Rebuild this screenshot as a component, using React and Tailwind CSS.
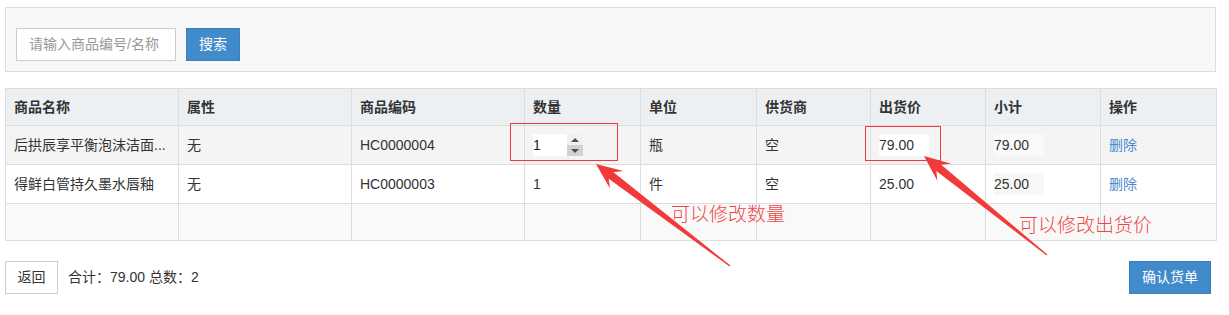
import React from "react";

function arrowPoints(tx, ty, sx, sy) {
  const dx = sx - tx, dy = sy - ty;
  const L = Math.hypot(dx, dy);
  const ux = dx / L, uy = dy / L;
  const nx = -uy, ny = ux;
  const headLen = 26, headHalf = 11, neckLen = 19, neckHalf = 4, tailHalf = 0.6;
  const p = (a, b) => `${a.toFixed(1)},${b.toFixed(1)}`;
  return [
    p(tx, ty),
    p(tx + ux * headLen + nx * headHalf, ty + uy * headLen + ny * headHalf),
    p(tx + ux * neckLen + nx * neckHalf, ty + uy * neckLen + ny * neckHalf),
    p(sx + nx * tailHalf, sy + ny * tailHalf),
    p(sx - nx * tailHalf, sy - ny * tailHalf),
    p(tx + ux * neckLen - nx * neckHalf, ty + uy * neckLen - ny * neckHalf),
    p(tx + ux * headLen - nx * headHalf, ty + uy * headLen - ny * headHalf),
  ].join(" ");
}

const font = { fontFamily: '"Liberation Sans", "Noto Sans CJK SC", sans-serif' };

function Th({ children, w }) {
  return (
    <th className={`${w} h-[37px] border border-[#dddddd] px-[8px] text-left align-middle text-[14px] font-bold text-[#333333]`}>
      {children}
    </th>
  );
}

function Td({ children }) {
  return (
    <td className="border border-[#dddddd] px-[8px] align-middle text-[14px] text-[#333333] whitespace-nowrap overflow-hidden">
      {children}
    </td>
  );
}

function Spinner() {
  return (
    <div className="flex h-[22px] w-[50px] items-center bg-white">
      <span className="flex-1 text-[14px] leading-none text-[#222]">1</span>
      <div className="flex h-[22px] w-[16px] flex-col">
        <div className="flex h-[11px] items-center justify-center bg-[#f0f0f0]">
          <div className="h-0 w-0 border-x-[4px] border-b-[4px] border-x-transparent border-b-[#505050]" />
        </div>
        <div className="flex h-[11px] items-center justify-center bg-[#d2d2d2]">
          <div className="h-0 w-0 border-x-[4px] border-t-[4px] border-x-transparent border-t-[#505050]" />
        </div>
      </div>
    </div>
  );
}

export default function App() {
  return (
    <div className="relative h-[315px] w-[1229px] bg-white pl-[5px] pr-[13px] pt-[7px]" style={font}>
      {/* search panel */}
      <div className="flex items-center gap-[10px] border border-[#dddddd] bg-[#f8f8f8] pl-[10px] pt-[20px] pb-[10px]">
        <div className="flex h-[33px] w-[160px] items-center border border-[#cccccc] bg-white pl-[12px] text-[14px] text-[#999999]">
          请输入商品编号/名称
        </div>
        <button className="h-[33px] w-[54px] border border-[#3a80bf] bg-[#428bca] text-[14px] text-white">
          搜索
        </button>
      </div>

      {/* table */}
      <table className="mt-[16px] w-[1211px] table-fixed border-collapse">
        <thead>
          <tr className="bg-[#edf0f3]">
            <Th w="w-[173px]">商品名称</Th>
            <Th w="w-[173px]">属性</Th>
            <Th w="w-[173px]">商品编码</Th>
            <Th w="w-[116px]">数量</Th>
            <Th w="w-[116px]">单位</Th>
            <Th w="w-[114px]">供货商</Th>
            <Th w="w-[115px]">出货价</Th>
            <Th w="w-[115px]">小计</Th>
            <Th w="w-[116px]">操作</Th>
          </tr>
        </thead>
        <tbody>
          <tr className="h-[39px] bg-[#f4f4f4]">
            <Td>后拱辰享平衡泡沫洁面...</Td>
            <Td>无</Td>
            <Td>HC0000004</Td>
            <Td><Spinner /></Td>
            <Td>瓶</Td>
            <Td>空</Td>
            <Td><div className="flex h-[22px] w-[50px] items-center bg-white">79.00</div></Td>
            <Td><div className="flex h-[22px] w-[50px] items-center bg-[#f9f9f9]">79.00</div></Td>
            <Td><span className="text-[#4a8ad0]">删除</span></Td>
          </tr>
          <tr className="h-[39px] bg-white">
            <Td>得鲜白管持久墨水唇釉</Td>
            <Td>无</Td>
            <Td>HC0000003</Td>
            <Td>1</Td>
            <Td>件</Td>
            <Td>空</Td>
            <Td>25.00</Td>
            <Td><div className="flex h-[22px] w-[50px] items-center bg-[#f7f7f7]">25.00</div></Td>
            <Td><span className="text-[#4a8ad0]">删除</span></Td>
          </tr>
          <tr className="h-[37px] bg-[#f9f9f9]">
            <Td></Td><Td></Td><Td></Td><Td></Td><Td></Td><Td></Td><Td></Td><Td></Td><Td></Td>
          </tr>
        </tbody>
      </table>

      {/* bottom bar */}
      <div className="mt-[20px] flex items-center">
        <button className="h-[33px] w-[53px] border border-[#cccccc] bg-white text-[14px] text-[#333333]">
          返回
        </button>
        <span className="ml-[10px] text-[14px] text-[#333333]">合计：79.00 总数：2</span>
        <button className="ml-auto mr-[5px] h-[33px] w-[82px] border border-[#3a80bf] bg-[#428bca] text-[14px] text-white">
          确认货单
        </button>
      </div>

      {/* annotations */}
      <div className="pointer-events-none absolute left-[510px] top-[123px] h-[38px] w-[108px] border border-[#f03a3a]" />
      <div className="pointer-events-none absolute left-[865px] top-[126px] h-[35px] w-[76px] border border-[#f03a3a]" />
      <svg className="pointer-events-none absolute left-0 top-0" width="1229" height="315">
        <polygon points={arrowPoints(596, 164, 730, 266)} fill="#f23a3a" />
        <polygon points={arrowPoints(924, 156, 1047, 255)} fill="#f23a3a" />
      </svg>
      <div className="pointer-events-none absolute left-[671px] top-[201px] text-[19px] leading-[24px] font-light text-[#f04545]" style={{ fontFamily: '"Noto Sans CJK SC", sans-serif' }}>
        可以修改数量
      </div>
      <div className="pointer-events-none absolute left-[1019px] top-[212px] text-[19px] leading-[24px] font-light text-[#f04545]" style={{ fontFamily: '"Noto Sans CJK SC", sans-serif' }}>
        可以修改出货价
      </div>
    </div>
  );
}
